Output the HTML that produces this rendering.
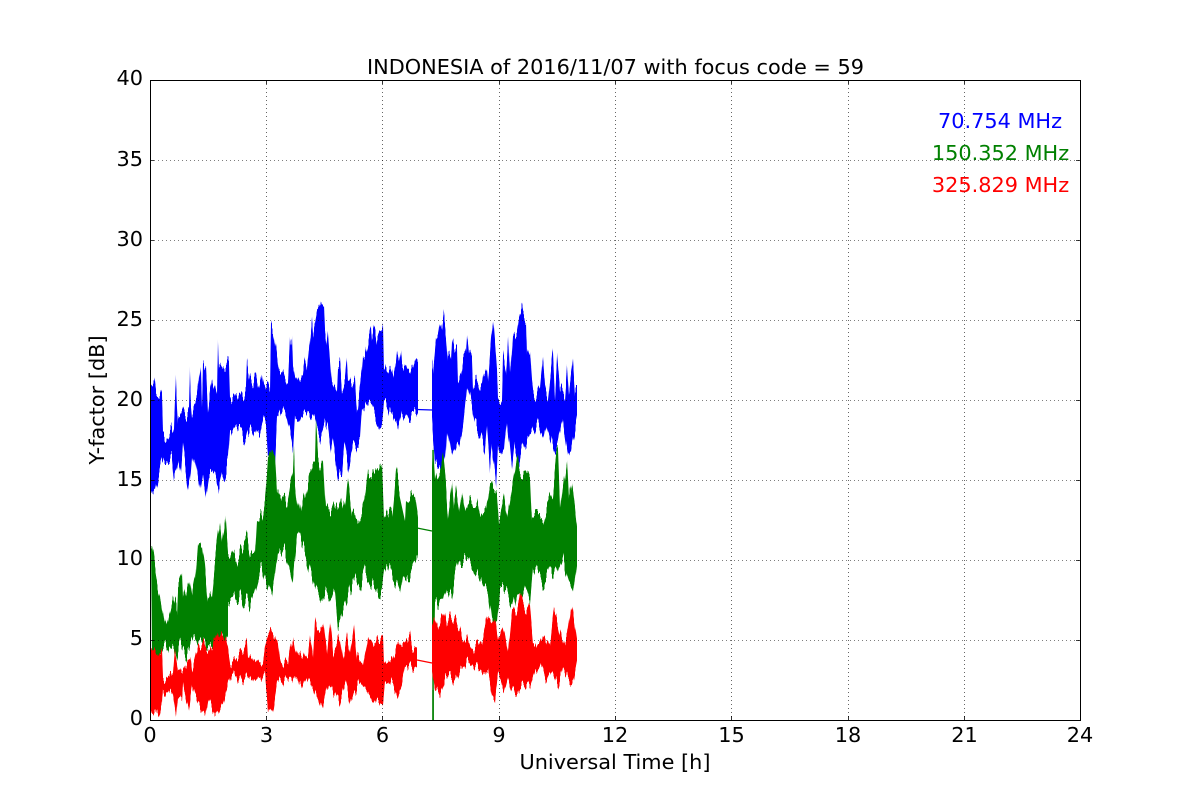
<!DOCTYPE html>
<html><head><meta charset="utf-8"><title>INDONESIA</title>
<style>html,body{margin:0;padding:0;background:#fff}svg{display:block}text{font-family:"DejaVu Sans",sans-serif;font-size:20.83px;fill:#000}</style>
</head><body>
<svg width="1200" height="800" viewBox="0 0 1200 800" xmlns="http://www.w3.org/2000/svg">
<defs>
<clipPath id="ax"><rect x="150" y="80" width="930" height="640"/></clipPath>
<filter id="jb" filterUnits="userSpaceOnUse" x="140" y="290" width="450" height="440" color-interpolation-filters="sRGB"><feTurbulence type="fractalNoise" baseFrequency="0.33 0.003" numOctaves="2" seed="3"/><feColorMatrix type="matrix" values="0 0 0 0 0.5  2.4 0 0 0 -0.7  0 0 0 0 0  0 0 0 0 1" result="n"/><feDisplacementMap in="SourceGraphic" in2="n" scale="16" xChannelSelector="R" yChannelSelector="G"/></filter>
<filter id="jg" filterUnits="userSpaceOnUse" x="140" y="290" width="450" height="440" color-interpolation-filters="sRGB"><feTurbulence type="fractalNoise" baseFrequency="0.33 0.003" numOctaves="2" seed="11"/><feColorMatrix type="matrix" values="0 0 0 0 0.5  2.4 0 0 0 -0.7  0 0 0 0 0  0 0 0 0 1" result="n"/><feDisplacementMap in="SourceGraphic" in2="n" scale="16" xChannelSelector="R" yChannelSelector="G"/></filter>
<filter id="jr" filterUnits="userSpaceOnUse" x="140" y="290" width="450" height="440" color-interpolation-filters="sRGB"><feTurbulence type="fractalNoise" baseFrequency="0.33 0.003" numOctaves="2" seed="23"/><feColorMatrix type="matrix" values="0 0 0 0 0.5  2.4 0 0 0 -0.7  0 0 0 0 0  0 0 0 0 1" result="n"/><feDisplacementMap in="SourceGraphic" in2="n" scale="12" xChannelSelector="R" yChannelSelector="G"/></filter>
</defs>
<rect width="1200" height="800" fill="#fff"/>
<g clip-path="url(#ax)">
<!-- blue -->
<path d="M417 409.5L432 410" stroke="#0000ff" stroke-width="1.2" fill="none"/>
<g filter="url(#jb)">
<polygon fill="#0000ff" points="151,387 154,380 156,397 160,395 162,400 163,433 166,435 170,430 174,427 175,400 176,375 177,400 178,417 182,413 184,415 189,413 190,371 191,400 192,410 197,397 201,365 202,400 203,362 206,367 208,407 212,380 217,400 218,339 219,370 224,365 227,362 229,365 230,398 236,400 240,400 246,388 247,365 250,380 253,385 256,377 258,387 262,372 264,387 268,383 270,387 271,325 272,328 273,328 275,343 277,357 279,373 282,371 283,372 287,380 288,380 290,343 292,335 293,367 295,377 298,370 300,377 303,375 305,362 307,370 310,340 312,318 313,332 317,310 321,304 323,307 324,307 325,330 327,343 328,335 330,360 332,387 333,388 337,383 338,363 340,363 342,387 345,383 347,363 348,380 350,380 353,382 355,380 357,410 358,407 362,372 363,357 365,357 368,340 371,325 372,340 375,328 377,337 379,332 382,331 383,323 384,372 387,373 391,368 393,377 396,363 397,353 399,363 401,352 402,365 405,363 407,367 410,365 413,370 414,367 416,360 418,362 418,415 416,415 408,415 402,413 398,432 393,417 384,403 382,427 377,418 372,405 367,403 362,415 360,445 358,445 353,443 350,460 348,467 344,447 342,470 338,473 333,443 331,455 328,427 325,420 320,437 317,430 313,413 310,417 305,418 300,413 295,415 293,448 290,430 287,415 283,408 277,420 275,457 272,457 268,457 266,420 263,418 260,430 257,433 255,440 250,432 248,432 246,440 243,438 240,432 230,433 228,463 225,473 222,480 219,492 216,480 213,473 209,470 206,492 203,470 200,493 197,473 195,460 192,450 190,475 188,485 183,450 181,477 178,460 176,470 174,477 172,457 165,457 162,463 158,480 155,497 151,492"/>
<polygon fill="#0000ff" points="432,367 433,372 436,338 438,333 440,322 442,330 444,317 446,332 448,357 451,360 452,340 454,347 457,347 458,380 461,370 463,357 466,352 467,335 469,353 472,360 473,387 477,380 479,382 482,388 484,375 487,370 488,380 491,340 493,322 494,330 497,367 498,397 502,397 503,358 506,375 508,335 510,380 513,335 517,330 519,318 522,310 523,315 526,318 527,353 530,352 532,380 533,388 537,398 540,388 543,357 545,385 548,397 553,353 555,393 557,355 560,393 562,388 565,393 567,365 569,393 573,360 575,393 577,393 577,423 573,443 571,457 568,452 563,418 558,447 553,448 547,423 543,443 537,423 530,433 523,447 519,462 515,447 512,475 507,423 504,457 498,440 496,483 492,447 490,473 487,427 485,450 480,433 475,425 472,407 467,387 463,423 460,440 457,442 453,457 451,450 447,425 445,460 442,472 440,460 435,462 432,423"/>
</g>
<!-- green -->
<path d="M417 528L432 531" stroke="#008000" stroke-width="1.2" fill="none"/>
<g filter="url(#jg)">
<polygon fill="#008000" points="151,545 152,545 155,567 160,597 165,630 168,618 173,595 177,610 178,588 182,580 183,603 189,577 192,598 195,582 198,543 202,542 205,567 208,600 212,590 215,560 220,522 222,540 225,516 228,553 232,555 237,560 243,545 247,537 250,552 255,548 257,513 262,515 265,500 268,457 272,458 275,460 277,497 283,497 287,500 290,485 293,470 294,448 295,480 297,500 300,517 305,493 310,473 315,463 316,422 317,440 318,457 320,463 323,455 326,507 332,513 340,497 345,513 348,477 352,510 358,520 362,515 365,500 368,470 372,472 377,467 382,465 384,520 392,513 396,470 400,490 405,513 406,493 412,498 415,503 418,523 418,560 415,567 410,577 403,570 400,590 390,570 384,573 382,592 377,590 370,580 365,572 360,587 355,577 350,590 345,608 340,622 338,623 335,593 332,600 325,590 320,598 315,588 310,570 305,553 297,533 293,580 290,567 285,550 278,558 274,587 272,597 268,588 265,583 262,568 260,568 255,587 250,605 248,600 245,603 240,597 232,600 228,600 228,637 222,640 215,645 205,645 198,640 192,640 186,655 180,645 176,660 174,645 165,648 160,655 152,655"/>
<polygon fill="#008000" points="432,470 433,450 435,487 437,478 440,473 443,460 446,487 448,513 452,478 454,507 456,493 459,513 462,492 465,513 470,500 477,500 480,513 486,510 490,488 493,490 497,490 499,520 504,500 507,517 512,482 517,452 519,470 524,472 527,473 530,472 532,517 543,517 548,503 553,490 557,453 558,453 560,510 567,458 569,500 572,480 575,503 577,523 577,560 573,593 568,582 563,557 557,577 552,570 543,583 533,567 530,602 527,593 517,590 513,607 507,590 500,590 497,620 492,625 488,593 482,580 477,570 470,560 460,560 455,577 452,592 447,590 443,607 440,605 435,602 434,660 432,660"/>
</g>
<rect x="432.3" y="450" width="1.5" height="270" fill="#008000"/>
<!-- red -->
<path d="M417 660L432 663" stroke="#ff0000" stroke-width="1.2" fill="none"/>
<g filter="url(#jr)">
<polygon fill="#ff0000" points="151,648 152,648 155,652 160,655 162,653 163,678 168,677 173,675 175,650 178,670 183,670 190,655 192,672 198,647 203,642 210,653 218,630 225,637 228,650 230,663 237,658 247,643 248,657 257,660 263,663 268,633 273,632 278,643 280,663 288,662 290,647 293,637 295,650 303,658 308,653 310,635 313,657 315,623 317,630 323,623 327,653 330,620 333,653 340,635 343,660 347,638 350,653 354,623 357,657 363,665 368,638 372,643 375,642 377,638 380,638 383,634 384,663 392,662 397,643 402,645 410,636 412,647 417,646 417,667 405,667 402,683 398,697 393,683 385,683 383,703 377,703 372,700 367,692 360,683 357,687 350,702 345,683 339,703 333,690 327,687 323,707 318,700 313,687 307,677 303,690 297,678 290,677 283,682 277,683 273,710 268,707 265,675 257,680 248,678 240,680 232,673 228,683 223,707 220,713 215,715 212,710 208,697 205,715 198,703 192,687 189,712 183,683 182,700 178,697 176,715 173,697 168,692 163,690 162,707 159,720 157,713 152,710 151,710"/>
<polygon fill="#ff0000" points="432,627 434,617 438,630 441,620 444,608 447,623 451,615 455,620 460,627 463,643 466,638 473,650 482,640 486,617 492,623 495,617 498,640 503,625 508,650 512,612 517,610 520,598 525,608 530,610 533,643 542,643 545,635 550,647 554,610 558,623 563,645 567,637 571,605 573,613 577,640 577,662 573,683 568,680 563,667 558,685 552,673 545,678 542,667 535,670 530,687 525,683 518,692 512,692 508,677 504,693 498,673 495,698 492,698 488,673 485,673 475,667 468,662 460,670 455,683 452,677 445,677 440,695 435,690 432,673"/>
</g>
<rect x="432.3" y="690" width="1.5" height="30" fill="#008000"/>
</g>
<!-- grid -->
<g stroke="#000" stroke-width="0.6" stroke-dasharray="1 3" fill="none">
<path d="M266.5 80V720M382.5 80V720M499.5 80V720M615.5 80V720M731.5 80V720M848.5 80V720M964.5 80V720"/>
<path d="M150 160.5H1080M150 240.5H1080M150 320.5H1080M150 400.5H1080M150 480.5H1080M150 560.5H1080M150 640.5H1080"/>
</g>
<!-- ticks -->
<g stroke="#000" stroke-width="0.8" fill="none">
<path d="M266.5 720v-4M382.5 720v-4M499.5 720v-4M615.5 720v-4M731.5 720v-4M848.5 720v-4M964.5 720v-4M266.5 80v4M382.5 80v4M499.5 80v4M615.5 80v4M731.5 80v4M848.5 80v4M964.5 80v4"/>
<path d="M150 160.5h4M150 240.5h4M150 320.5h4M150 400.5h4M150 480.5h4M150 560.5h4M150 640.5h4M1080 160.5h-4M1080 240.5h-4M1080 320.5h-4M1080 400.5h-4M1080 480.5h-4M1080 560.5h-4M1080 640.5h-4"/>
</g>
<rect x="150.5" y="80.5" width="930" height="640" fill="none" stroke="#000" stroke-width="1"/>
<!-- text -->
<text x="615.5" y="74" text-anchor="middle">INDONESIA of 2016/11/07 with focus code = 59</text>
<g text-anchor="middle">
<text x="150" y="742">0</text><text x="266.5" y="742">3</text><text x="382.5" y="742">6</text><text x="499" y="742">9</text><text x="615" y="742">12</text><text x="731.5" y="742">15</text><text x="848" y="742">18</text><text x="964.5" y="742">21</text><text x="1080" y="742">24</text>
<text x="615" y="769">Universal Time [h]</text>
</g>
<g text-anchor="end">
<text x="143" y="85">40</text><text x="143" y="166">35</text><text x="143" y="246">30</text><text x="143" y="326">25</text><text x="143" y="406">20</text><text x="143" y="486">15</text><text x="143" y="565">10</text><text x="143" y="645">5</text><text x="143" y="725">0</text>
</g>
<text transform="translate(104 400) rotate(-90)" text-anchor="middle">Y-factor [dB]</text>
<g text-anchor="middle">
<text x="1000" y="128" style="fill:#0000ff">70.754 MHz</text>
<text x="1000.5" y="160" style="fill:#008000">150.352 MHz</text>
<text x="1000.5" y="192" style="fill:#ff0000">325.829 MHz</text>
</g>
</svg>
</body></html>
